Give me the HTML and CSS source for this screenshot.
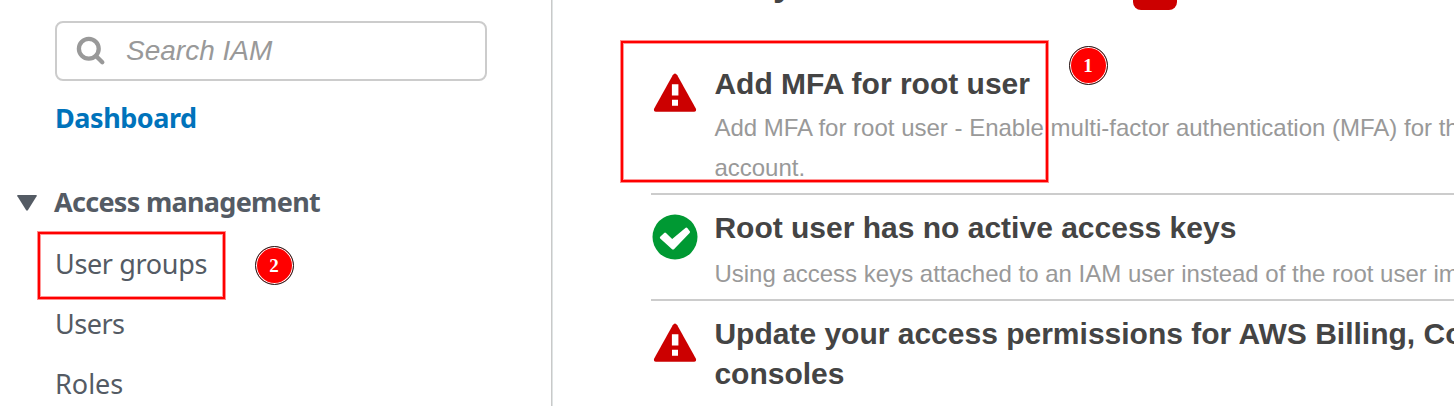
FILE: index.html
```html
<!DOCTYPE html>
<html lang="en">
<head>
<meta charset="utf-8">
<title>IAM Dashboard</title>
<link rel="stylesheet" href="styles.css">
</head>
<body>
<div class="app">
  <nav class="sidebar">
    <div class="search">
      <svg class="search-icon" width="30" height="30" viewBox="0 0 30 30"><circle cx="12.8" cy="12.8" r="9.9"/><path d="M20 20l6.300 6.300"/></svg>
      <span class="search-text">Search IAM</span>
    </div>
    <a class="dashboard">Dashboard</a>
    <div class="section">
      <svg class="caret" width="22" height="18" viewBox="0 0 22 18"><path d="M2 1h18q1.400 0 .6 1.300L12 16q-1 1.500-2 0L1.400 2.300Q.6 1 2 1z"/></svg>
      <span class="section-title">Access management</span>
    </div>
    <a class="item groups">User groups</a>
    <a class="item users">Users</a>
    <a class="item roles">Roles</a>
  </nav>
  <main class="content">
    <header class="heading"><h1 class="title">Security recommendations</h1><span class="count"></span></header>
    <section class="rec rec-first">
      <svg class="icon" width="46" height="46" viewBox="0 0 46 46"><path class="warn" d="M20.700 4.300q2.300-3.500 4.600 0L43.800 37.500q1.200 3-1.800 3.200H4q-3-.2-1.800-3.200z"/><path class="mark" d="M19.900 13.300h6.500v11.200h-6.500zM20 28.700h6v6h-6z"/></svg>
      <div class="body">
        <h2 class="name name-mfa">Add MFA for root user</h2>
        <p class="desc desc-mfa">Add MFA for root user - Enable multi-factor authentication (MFA) for th<br>account.</p>
      </div>
    </section>
    <section class="rec rec-keys">
      <svg class="icon" width="46" height="46" viewBox="0 0 46 46"><circle class="ok" cx="23" cy="23" r="22.500"/><path class="mark" d="M8.200 22.800L12.200 18.900Q13.100 18.100 14 19L20.200 25.100 33.700 13.800Q34.500 13.200 35.300 14L37.800 17.200Q38.500 18 37.600 18.900L22.200 35Q21 36 19.800 35L8.200 24.500Q7.400 23.700 8.200 22.800z"/></svg>
      <div class="body">
        <h2 class="name name-keys">Root user has no active access keys</h2>
        <p class="desc desc-keys">Using access keys attached to an IAM user instead of the root user im</p>
      </div>
    </section>
    <section class="rec rec-billing">
      <svg class="icon" width="46" height="46" viewBox="0 0 46 46"><path class="warn" d="M20.700 4.300q2.300-3.500 4.600 0L43.800 37.500q1.200 3-1.800 3.200H4q-3-.2-1.800-3.200z"/><path class="mark" d="M19.900 13.300h6.500v11.200h-6.500zM20 28.700h6v6h-6z"/></svg>
      <div class="body">
        <h2 class="name name-billing">Update your access permissions for AWS Billing, Co<br>consoles</h2>
      </div>
    </section>
  </main>
  <div class="outline outline-mfa"></div>
  <div class="outline outline-groups"></div>
  <div class="pin pin-one">1</div>
  <div class="pin pin-two">2</div>
</div>
</body>
</html>
```
FILE: styles.css
```css
* { box-sizing: border-box; }
body { margin: 0; background: #fff; overflow: hidden; }
.app { position: relative; display: flex; width: 1454px; height: 406px; overflow: hidden; }
.sidebar { width: 553px; flex: none; height: 406px; padding-top: 21px; display: flex; flex-direction: column; border-right: 1px solid #dfe4e4; box-shadow: inset -1px 0 #c9c9c9; font-family: "Noto Sans", sans-serif; color: #545b64; white-space: nowrap; }
.search { margin-left: 55px; width: 432px; height: 60px; border: 2px solid #ccc; border-radius: 8px; display: flex; align-items: center; padding-left: 19px; }
.search-icon { flex: none; fill: none; stroke: #999; stroke-width: 4.300; stroke-linecap: round; }
.search-text { margin-left: 20px; font: italic 28px/56px "Liberation Sans", Arial, sans-serif; color: #999; }
.dashboard { margin: 17px 0 0 55px; font-size: 27px; line-height: 40px; font-weight: 700; letter-spacing: -.45px; color: #0073bb; }
.section { display: flex; align-items: center; margin-top: 44px; padding-left: 16px; height: 40px; }
.caret { fill: #545b64; margin-top: 2px; }
.section-title { margin-left: 16px; font-size: 27px; line-height: 40px; font-weight: 700; letter-spacing: -.7px; }
.item { margin-left: 55px; font-size: 27px; line-height: 40px; letter-spacing: -.35px; }
.groups { margin-top: 22px; }
.users, .roles { margin-top: 20px; }
.users { letter-spacing: -.5px; }
.roles { letter-spacing: 0; }
.content { flex: 1; min-width: 0; overflow: hidden; padding-left: 98px; font-family: "Liberation Sans", Arial, sans-serif; color: #444; white-space: nowrap; }
.heading { display: flex; height: 49px; }
.title { margin: -37px 0 0; width: 482px; font-size: 36px; line-height: 40px; }
.count { width: 44px; height: 34px; margin-top: -24px; border-radius: 8px; background: #c00; }
.rec { display: flex; border-bottom: 2px solid #ccc; padding-left: 1px; }
.icon { flex: none; }
.body { margin-left: 16.400px; }
.warn { fill: #c00; }
.ok { fill: #093; }
.mark { fill: #fff; }
.name { margin: 0; font-size: 30px; line-height: 40px; font-weight: 700; }
.desc { margin: 0; font-size: 24px; line-height: 40px; color: #999; }
.rec-first { height: 146px; padding-top: 15px; }
.rec-first .icon { margin-top: 7px; }
.desc-mfa { margin-top: 4px; }
.rec-keys { height: 106px; padding-top: 13px; }
.rec-keys .icon { margin-top: 6px; }
.desc-keys { margin-top: 6px; }
.rec-billing { padding-top: 13px; border: 0; }
.rec-billing .icon { margin-top: 7px; }
.outline { position: absolute; border: 2px solid #f00; box-shadow: 0 0 0 1px rgba(255, 0, 0, .45), inset 0 0 0 1px rgba(255, 0, 0, .4); }
.outline-mfa { left: 621px; top: 41px; width: 427px; height: 141px; }
.outline-groups { left: 38px; top: 232px; width: 187px; height: 67px; }
.pin { position: absolute; width: 39px; height: 39px; border: 1px solid #222; border-radius: 50%; box-shadow: inset 0 0 0 1px #fff; background: #f00; color: #fff; font: bold 19px/38px "Liberation Serif", "Times New Roman", serif; text-align: center; }
.pin-one { left: 1068.500px; top: 45.500px; }
.pin-two { left: 254.500px; top: 245.500px; }
```
